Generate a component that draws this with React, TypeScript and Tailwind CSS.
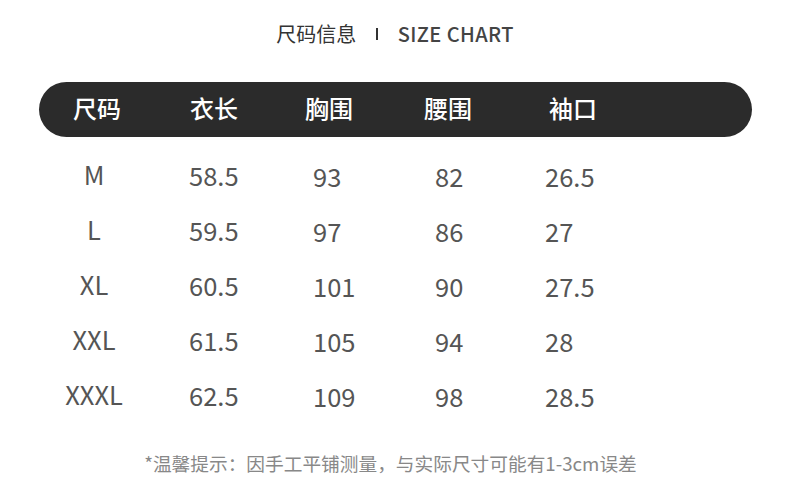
const font = "font-['Noto_Sans_CJK_SC','Noto_Sans',sans-serif]";

const rows = [
  ["M", "58.5", "93", "82", "26.5"],
  ["L", "59.5", "97", "86", "27"],
  ["XL", "60.5", "101", "90", "27.5"],
  ["XXL", "61.5", "105", "94", "28"],
  ["XXXL", "62.5", "109", "98", "28.5"],
];

export default function App() {
  return (
    <div className={`w-[790px] h-[501px] bg-white ${font}`}>
      {/* 标题 */}
      <div className="flex items-center justify-center pt-[19px] h-[48px]">
        <span className="text-[20px] leading-[28px] text-[#333]">尺码信息</span>
        <span className="mx-[20px] w-[1.5px] h-[12px] bg-[#333]" />
        <span className="text-[20px] leading-[28px] text-[#444] font-medium tracking-[0.4px]">SIZE CHART</span>
      </div>

      {/* 表头 */}
      <div className="mt-[34px] ml-[39px] mr-[38px] h-[55px] rounded-full bg-[#2b2b2b] flex items-center text-white text-[24px] font-medium leading-none">
        <div className="w-[151px] pl-[34px] -mt-[3px]">尺码</div>
        <div className="w-[115px] -mt-[3px]">衣长</div>
        <div className="w-[119px] -mt-[3px]">胸围</div>
        <div className="w-[125px] -mt-[3px]">腰围</div>
        <div className="-mt-[3px]">袖口</div>
      </div>

      {/* 数据 */}
      <div className="mt-[11px] text-[25.5px] text-[#555] leading-none">
        {rows.map((r) => (
          <div key={r[0]} className="flex items-center h-[55px]">
            <div className="ml-[39px] w-[110px] text-center -mt-[3px]">{r[0]}</div>
            <div className="ml-[40px] w-[124px] -mt-[1px]">{r[1]}</div>
            <div className="w-[122px]">{r[2]}</div>
            <div className="w-[110px]">{r[3]}</div>
            <div className="mt-[1px]">{r[4]}</div>
          </div>
        ))}
      </div>

      {/* 备注 */}
      <div className="mt-[27px] pr-[9px] text-center text-[18.7px] leading-[26px] text-[#888]">
        *温馨提示：因手工平铺测量，与实际尺寸可能有1-3cm误差
      </div>
    </div>
  );
}
